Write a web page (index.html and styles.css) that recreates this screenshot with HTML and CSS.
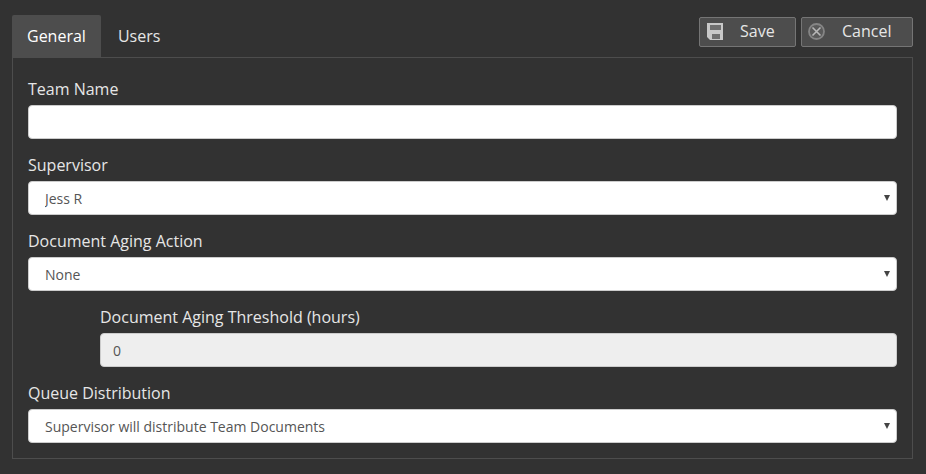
FILE: index.html
```html
<!DOCTYPE html>
<html lang="en">
<head>
<meta charset="utf-8">
<title>Team</title>
<link rel="stylesheet" href="styles.css">
</head>
<body>
<div class="page">
  <div class="topbar">
    <div class="tabs">
      <div class="tab active">General</div>
      <div class="tab">Users</div>
    </div>
    <div class="actions">
      <button class="btn btn-save" type="button">
        <svg class="icon" width="16" height="17" viewBox="0 0 16 17"><path fill="#c8c8c8" d="M0 0H16V17H3L0 14Z"/><path fill="#6f6f6f" d="M3 2H14V7H3ZM5 11H13V16H5Z"/></svg>
        <span>Save</span>
      </button>
      <button class="btn btn-cancel" type="button">
        <svg class="icon" width="17" height="17" viewBox="0 0 17 17"><circle cx="8.500" cy="8.500" r="7.500" fill="#5a5a5a" stroke="#858585" stroke-width="1.800"/><path d="M4.500 4.500l8 8M12.500 4.500l-8 8" stroke="#b8b8b8" stroke-width="1.600" fill="none"/></svg>
        <span>Cancel</span>
      </button>
    </div>
  </div>
  <form class="panel">
    <div class="field">
      <label class="label">Team Name</label>
      <input class="control" type="text">
    </div>
    <div class="field">
      <label class="label">Supervisor</label>
      <div class="select-wrap"><select class="control"><option>Jess R</option></select></div>
    </div>
    <div class="field">
      <label class="label">Document Aging Action</label>
      <div class="select-wrap"><select class="control"><option>None</option></select></div>
    </div>
    <div class="field indented">
      <label class="label">Document Aging Threshold (hours)</label>
      <input class="control" type="text" value="0" disabled>
    </div>
    <div class="field">
      <label class="label">Queue Distribution</label>
      <div class="select-wrap"><select class="control"><option>Supervisor will distribute Team Documents</option></select></div>
    </div>
  </form>
</div>
</body>
</html>
```
FILE: styles.css
```css
* { box-sizing: border-box; }
html, body { margin: 0; height: 100%; }
body {
  background: #323232;
  font-family: "Open Sans", "Liberation Sans", sans-serif;
  color: #e6e6e6;
  overflow: hidden;
}
.page { padding: 15px 13px 0 12px; }
.topbar {
  display: flex;
  justify-content: space-between;
  height: 42px;
}
.tabs { display: flex; }
.tab {
  height: 42px;
  padding: 0 15px;
  font-size: 16px;
  line-height: 42px;
  color: #e6e6e6;
  margin-right: 2px;
  border-radius: 2px 2px 0 0;
}
.tab.active { background: #4d4d4d; color: #fff; }
.actions { display: flex; gap: 5px; padding-top: 2px; align-items: flex-start; }
.btn {
  display: flex;
  align-items: center;
  height: 30px;
  padding: 0 0 2px;
  background: #4d4d4d;
  border: 1px solid #757575;
  border-radius: 2px;
  color: #e6e6e6;
  font-family: inherit;
  font-size: 16px;
}
.btn-save { width: 97px; padding-left: 7px; }
.btn-save span { margin-left: 17px; }
.btn-cancel { width: 112px; padding-left: 6px; }
.btn-cancel span { margin-left: 17px; }
.panel {
  border: 1px solid #4d4d4d;
  height: 402px;
  padding: 17px 15px 0;
  display: flex;
  flex-direction: column;
  gap: 12px;
}
.label {
  display: block;
  font-size: 16px;
  line-height: 28px;
  height: 30px;
  color: #e6e6e6;
}
.indented { padding-left: 72px; }
.control {
  display: block;
  width: 100%;
  height: 34px;
  padding: 1px 16px 0;
  background: #fff;
  border: 1px solid #ccc;
  border-radius: 4px;
  font-family: inherit;
  font-size: 14px;
  color: #555;
  appearance: none;
  outline: none;
}
.control:disabled { background: #eee; color: #555; opacity: 1; padding-left: 12px; }
.select-wrap { position: relative; }
.select-wrap::after {
  content: "";
  position: absolute;
  right: 7px;
  top: 14px;
  border-left: 3px solid transparent;
  border-right: 3px solid transparent;
  border-top: 6px solid #444;
  pointer-events: none;
}
```
